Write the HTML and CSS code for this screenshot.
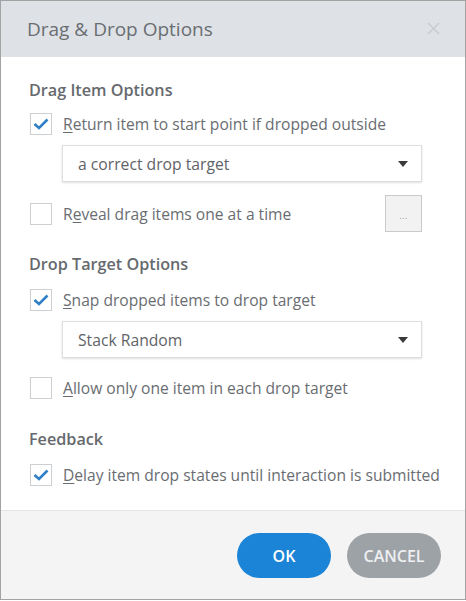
FILE: index.html
```html
<!DOCTYPE html>
<html>
<head>
<meta charset="utf-8">
<link rel="stylesheet" href="styles.css">
</head>
<body>
<div class="dialog">
  <div class="header">
    <span class="title">Drag &amp; Drop Options</span>
    <svg class="close" width="15" height="15" viewBox="0 0 15 15"><path d="M2 2L13 13M13 2L2 13" stroke="#c9cdd1" stroke-width="1.6" fill="none"/></svg>
  </div>
  <div class="body">
    <div class="heading h1">Drag Item Options</div>
    <div class="row r1">
      <span class="cb"><svg width="16" height="12" viewBox="0 0 16 12"><path d="M1.5 6L6 10L14.5 1.5" stroke="#2f7fc6" stroke-width="2.6" fill="none"/></svg></span>
      <span class="label"><u>R</u>eturn item to start point if dropped outside</span>
    </div>
    <div class="select s1"><span>a correct drop target</span><span class="caret"></span></div>
    <div class="row r2">
      <span class="cb"></span>
      <span class="label">R<u>e</u>veal drag items one at a time</span>
      <span class="more">...</span>
    </div>
    <div class="heading h2">Drop Target Options</div>
    <div class="row r3">
      <span class="cb"><svg width="16" height="12" viewBox="0 0 16 12"><path d="M1.5 6L6 10L14.5 1.5" stroke="#2f7fc6" stroke-width="2.6" fill="none"/></svg></span>
      <span class="label"><u>S</u>nap dropped items to drop target</span>
    </div>
    <div class="select s2"><span>Stack Random</span><span class="caret"></span></div>
    <div class="row r4">
      <span class="cb"></span>
      <span class="label"><u>A</u>llow only one item in each drop target</span>
    </div>
    <div class="heading h3">Feedback</div>
    <div class="row r5">
      <span class="cb"><svg width="16" height="12" viewBox="0 0 16 12"><path d="M1.5 6L6 10L14.5 1.5" stroke="#2f7fc6" stroke-width="2.6" fill="none"/></svg></span>
      <span class="label"><u>D</u>elay item drop states until interaction is submitted</span>
    </div>
  </div>
  <div class="footer">
    <button class="btn ok">OK</button>
    <button class="btn cancel">CANCEL</button>
  </div>
</div>
</body>
</html>
```

FILE: styles.css
```css
* { box-sizing: border-box; }
html, body { margin: 0; padding: 0; background: #ffffff; }
body { font-family: "Open Sans", "Noto Sans", sans-serif; color: #676b6f; }

.dialog {
  width: 466px;
  height: 600px;
  border: 1px solid #a3a3a3;
  display: flex;
  flex-direction: column;
  background: #fff;
}

.header {
  height: 56px;
  background: #dee2e6;
  display: flex;
  align-items: center;
  justify-content: space-between;
  padding: 0 24px 0 26px;
}
.title { font-size: 19px; color: #6a6e72; }
.close { display: block; margin-top: -2px; }

.body {
  flex: 1;
  padding: 21px 43px 0 29px;
  display: flex;
  flex-direction: column;
}

.heading {
  height: 24px;
  line-height: 24px;
  font-size: 16.2px;
  font-weight: 600;
  color: #666a6e;
  margin-left: -1px;
}
.h2 { margin-top: 20px; }
.h3 { margin-top: 27px; }

.row {
  display: flex;
  align-items: center;
  height: 24px;
  font-size: 15.6px;
}
.r1 { margin-top: 10px; }
.r2 { margin-top: 13px; height: 37px; }
.r3 { margin-top: 12px; }
.r4 { margin-top: 18px; }
.r5 { margin-top: 12px; }

.cb {
  width: 22px;
  height: 22px;
  border: 1px solid #cdd0d3;
  background: #fff;
  display: flex;
  align-items: center;
  justify-content: center;
  flex: none;
}
.cb svg { display: block; margin-top: -1px; }
.label { margin-left: 11px; white-space: nowrap; color: #696d71; }
.label u { text-decoration-thickness: 1px; text-underline-offset: 2px; }

.select {
  margin-left: 32px;
  height: 37px;
  border: 1px solid #dcdee0;
  box-shadow: 0 1px 2px rgba(0,0,0,0.12);
  display: flex;
  align-items: center;
  justify-content: space-between;
  padding: 0 13px 0 15px;
  font-size: 15.7px;
  color: #5f6367;
}
.s1 { margin-top: 9px; }
.s2 { margin-top: 9px; }
.caret {
  width: 0; height: 0;
  border-left: 5px solid transparent;
  border-right: 5px solid transparent;
  border-top: 6px solid #3a3a3a;
}

.more {
  margin-left: auto;
  width: 37px;
  height: 37px;
  border: 1px solid #c8cacc;
  background: #f2f2f2;
  display: flex;
  align-items: center;
  justify-content: center;
  padding-top: 3px;
  font-size: 9px;
  color: #9a9a9a;
  letter-spacing: 0.5px;
}

.footer {
  height: 89px;
  background: #f4f4f4;
  border-top: 1px solid #e4e4e4;
  display: flex;
  align-items: center;
  justify-content: flex-end;
  gap: 16px;
  padding-right: 24px;
  padding-top: 1px;
}
.btn {
  width: 94px;
  height: 45px;
  border: none;
  border-radius: 23px;
  font-family: "Open Sans", "Noto Sans", sans-serif;
  font-size: 16px;
  font-weight: 600;
  padding: 0;
}
.ok { background: #1b84d6; color: #ffffff; }
.cancel { background: #9da2a7; color: #eef0f2; }
```
